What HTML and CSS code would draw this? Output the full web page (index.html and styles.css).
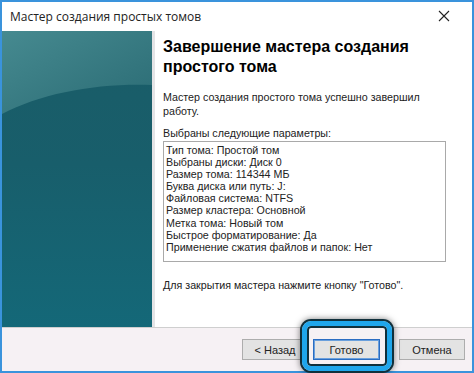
FILE: index.html
```html
<!DOCTYPE html>
<html lang="ru">
<head>
<meta charset="utf-8">
<title>Мастер создания простых томов</title>
<link rel="stylesheet" href="styles.css">
</head>
<body>
<div class="window">
  <div class="titlebar">
    <span class="title">Мастер создания простых томов</span>
    <svg class="close" width="12" height="12" viewBox="0 0 12 12"><path d="M1 1 L11 11 M11 1 L1 11" stroke="#222" stroke-width="1.1" fill="none"/></svg>
  </div>
  <div class="main">
    <div class="sidebar">
      <svg class="sheen" width="150" height="295" viewBox="0 0 150 295" preserveAspectRatio="none">
        <defs>
          <linearGradient id="top" x1="0" y1="0" x2="1" y2="1">
            <stop offset="0" stop-color="#468a90"/>
            <stop offset="1" stop-color="#2a6b74"/>
          </linearGradient>
        </defs>
        <path d="M0 0 H150 V54 C95 52 40 62 0 83 Z" fill="url(#top)"/>
      </svg>
    </div>
    <div class="content">
      <h1 class="heading">Завершение мастера создания простого тома</h1>
      <p class="text">Мастер создания простого тома успешно завершил работу.</p>
      <p class="label">Выбраны следующие параметры:</p>
      <div class="listbox">
        <div>Тип тома: Простой том</div>
        <div>Выбраны диски: Диск 0</div>
        <div>Размер тома: 114344 МБ</div>
        <div>Буква диска или путь: J:</div>
        <div>Файловая система: NTFS</div>
        <div>Размер кластера: Основной</div>
        <div>Метка тома: Новый том</div>
        <div>Быстрое форматирование: Да</div>
        <div>Применение сжатия файлов и папок: Нет</div>
      </div>
      <p class="close-hint">Для закрытия мастера нажмите кнопку "Готово".</p>
    </div>
  </div>
  <div class="footer">
    <button class="btn back">&lt; Назад</button>
    <div class="finish-wrap">
      <button class="btn finish">Готово</button>
      <div class="ring"></div>
    </div>
    <button class="btn cancel">Отмена</button>
  </div>
</div>
</body>
</html>
```
FILE: styles.css
```css
html, body {
  margin: 0;
  padding: 0;
  width: 474px;
  height: 373px;
  overflow: hidden;
}
body {
  font-family: "Liberation Sans", Arial, sans-serif;
  font-size: 10.7px;
  color: #111;
}
.window {
  box-sizing: border-box;
  width: 474px;
  height: 373px;
  border: 2px solid #3a93dc;
  display: flex;
  flex-direction: column;
  background: #fff;
}
.titlebar {
  height: 29px;
  flex: none;
  display: flex;
  align-items: center;
  justify-content: space-between;
  padding: 0 22px 0 8px;
  background: #fff;
}
.title {
  font-family: "Open Sans", "Noto Sans", sans-serif;
  font-size: 12px;
  color: #222;
}
.close {
  display: block;
  margin-top: -2px;
}
.main {
  flex: 1;
  display: flex;
  min-height: 0;
}
.sidebar {
  width: 150px;
  flex: none;
  background: linear-gradient(180deg, #1a5c67 0%, #185e6b 45%, #146878 100%);
  border-right: 3px solid #e4e4e6;
  position: relative;
  overflow: hidden;
}
.sheen {
  display: block;
}
.content {
  flex: 1;
  padding: 0 0 0 8px;
  background: #fff;
}
.heading {
  margin: 6px 0 0 0;
  font-family: "Liberation Sans", Arial, sans-serif;
  font-weight: bold;
  font-size: 16px;
  line-height: 20px;
  color: #000;
  width: 270px;
}
.text {
  margin: 13px 0 0 0;
  line-height: 14px;
  width: 270px;
  color: #222;
}
.label {
  margin: 8px 0 0 0;
  line-height: 14px;
  color: #222;
}
.listbox {
  box-sizing: border-box;
  width: 283px;
  height: 121px;
  margin-top: 1px;
  border: 1px solid #a9a9a9;
  padding: 2px 2px;
  line-height: 12.1px;
  color: #222;
}
.close-hint {
  margin: 16px 0 0 0;
  line-height: 14px;
  color: #222;
}
.footer {
  height: 43px;
  flex: none;
  border-top: 1px solid #cfcfcf;
  background: #f6f1f4;
  display: flex;
  align-items: center;
  justify-content: flex-end;
  padding: 0 7px 0 0;
}
.btn {
  box-sizing: border-box;
  height: 21px;
  width: 66px;
  font-family: "Liberation Sans", Arial, sans-serif;
  font-size: 11px;
  color: #222;
  background: #e3e3e3;
  border: 1px solid #adadad;
  padding: 0;
}
.finish-wrap {
  position: relative;
  margin-left: 5px;
}
.finish {
  display: block;
  width: 67px;
  border: 1px solid #2b6dc2;
  box-shadow: inset 0 0 0 1px #6aa0dd;
}
.cancel {
  margin-left: 19px;
}
.ring {
  position: absolute;
  left: -11px;
  right: -12px;
  top: -18px;
  bottom: -11px;
  border: 5px solid #1fa6ec;
  border-radius: 9px;
  box-shadow: 0 0 0 2px #10303c, inset 0 0 0 2px #10303c, 0 0 6px 2px rgba(0,0,0,0.5);
}
```
